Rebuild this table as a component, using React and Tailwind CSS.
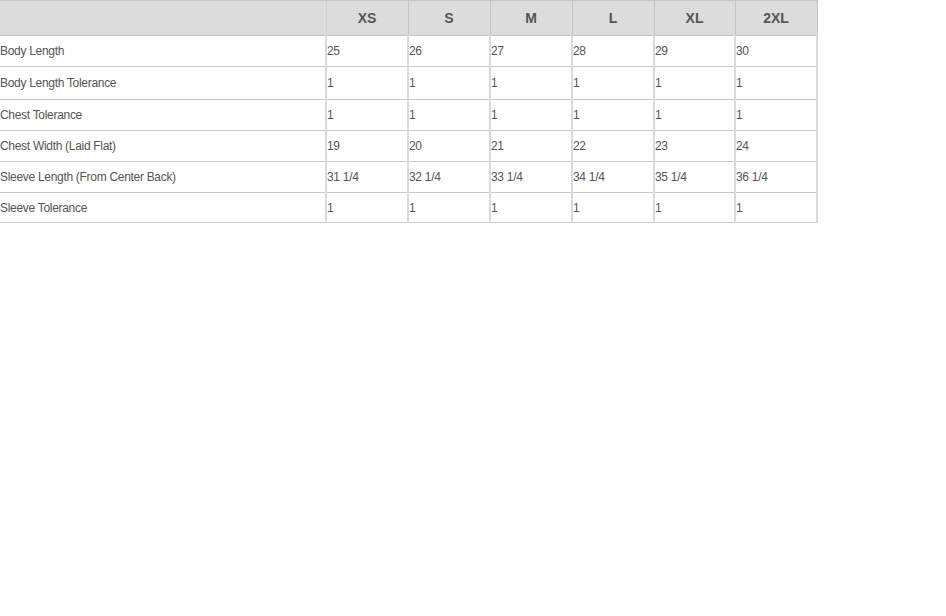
const sizes = ['XS', 'S', 'M', 'L', 'XL', '2XL'];

const rows = [
  { label: 'Body Length', values: ['25', '26', '27', '28', '29', '30'], h: 'h-[31px]' },
  { label: 'Body Length Tolerance', values: ['1', '1', '1', '1', '1', '1'], h: 'h-[33px]' },
  { label: 'Chest Tolerance', values: ['1', '1', '1', '1', '1', '1'], h: 'h-[31px]' },
  { label: 'Chest Width (Laid Flat)', values: ['19', '20', '21', '22', '23', '24'], h: 'h-[31px]' },
  { label: 'Sleeve Length (From Center Back)', values: ['31 1/4', '32 1/4', '33 1/4', '34 1/4', '35 1/4', '36 1/4'], h: 'h-[31px]' },
  { label: 'Sleeve Tolerance', values: ['1', '1', '1', '1', '1', '1'], h: 'h-[30px]' },
];

const App = () => {
  return (
    <div className="w-[946px] h-[616px] bg-white font-['Liberation_Sans',Arial,sans-serif] text-[#555]">
      <table className="w-[817px] border-collapse table-fixed text-[12px] tracking-[-0.3px]">
        <colgroup>
          <col className="w-[326px]" />
          <col className="w-[82px]" />
          <col className="w-[82px]" />
          <col className="w-[82px]" />
          <col className="w-[82px]" />
          <col className="w-[81px]" />
          <col className="w-[82px]" />
        </colgroup>
        <thead>
          <tr className="h-[35px] bg-[#dcdcdc]">
            <th className="border-t border-b border-[#c4c4c4]" />
            {sizes.map((s) => (
              <th
                key={s}
                className="border border-[#c4c4c4] border-l-[#d0d0d0] text-[14px] font-bold text-center text-[#555] tracking-normal"
              >
                {s}
              </th>
            ))}
          </tr>
        </thead>
        <tbody>
          {rows.map((r) => (
            <tr key={r.label} className={r.h}>
              <td className="border-b border-[#c8c8c8] text-left p-0 align-middle">{r.label}</td>
              {r.values.map((v, i) => (
                <td
                  key={i}
                  className="border-b border-[#c8c8c8] border-l-2 border-l-[#dadada] border-r-2 border-r-[#dadada] text-left p-0 align-middle"
                >
                  {v}
                </td>
              ))}
            </tr>
          ))}
        </tbody>
      </table>
    </div>
  );
};

export default App;
